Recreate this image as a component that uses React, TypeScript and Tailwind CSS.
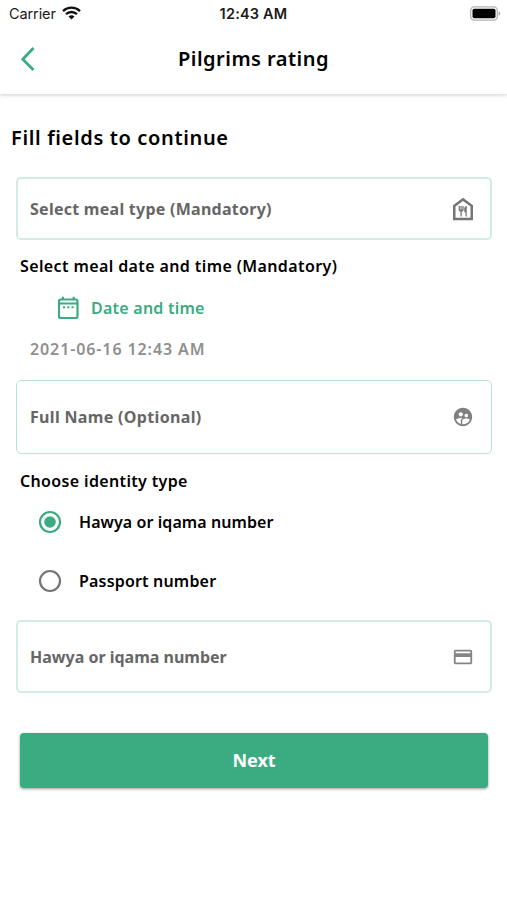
import React, { useState } from 'react';
import { MdCreditCard, MdOutlineFoodBank, MdSupervisedUserCircle } from 'react-icons/md';

interface FieldProps {
  label: string;
  icon: React.ReactNode;
  className: string;
  labelClassName: string;
}

function Field({ label, icon, className, labelClassName }: FieldProps) {
  return (
    <div className={`mr-[15px] ml-[16px] flex items-center justify-between rounded-[5px] ${className}`}>
      <span className={`whitespace-nowrap text-[16px] leading-6 font-bold text-[#666666] ${labelClassName}`}>{label}</span>
      {icon}
    </div>
  );
}

interface RadioOptionProps {
  label: string;
  selected: boolean;
  onSelect: () => void;
  labelClassName: string;
}

function RadioOption({ label, selected, onSelect, labelClassName }: RadioOptionProps) {
  return (
    <button type="button" role="radio" aria-checked={selected} onClick={onSelect} className="flex h-[58.5px] items-center gap-[17px] pl-[38px]">
      <svg className="h-6 w-6" viewBox="0 0 24 24" fill="none">
        <circle cx="12" cy="12" r="10" stroke={selected ? '#3bab81' : '#757575'} strokeWidth="2.2" />
        {selected && <circle cx="12" cy="12" r="5.8" fill="#3bab81" />}
      </svg>
      <span className={`whitespace-nowrap text-[16px] leading-6 font-semibold ${labelClassName}`}>{label}</span>
    </button>
  );
}

function StatusBar() {
  return (
    <div className="grid h-7 grid-cols-3 items-center pl-[9px] pr-[6px] font-['Inter',sans-serif] text-[#1a1a1a]">
      <div className="flex items-center gap-[6px]">
        <span className="text-[14.5px] leading-5 tracking-[-0.1px]">Carrier</span>
        <svg className="mb-[2px] h-[14px] w-[19px]" viewBox="0 0 19 14" fill="none" stroke="#111" strokeWidth="2.3">
          <path d="M1 5.1a12.3 12.3 0 0 1 17 0" />
          <path d="M4 8.2a8 8 0 0 1 11 0" />
          <path d="M9.5 13.5 6.5 10.6a4.3 4.3 0 0 1 6 0z" fill="#111" stroke="none" />
        </svg>
      </div>
      <span className="pr-[3px] text-center text-[14.5px] leading-5 font-semibold tracking-[0.2px] whitespace-nowrap">12:43 AM</span>
      <svg className="mb-[2px] h-[15px] w-[31px] justify-self-end" viewBox="0 0 31 15">
        <rect x="0.7" y="0.9" width="26.6" height="13.2" rx="3.6" fill="white" stroke="#b3b3b3" strokeWidth="1.3" />
        <rect x="2.5" y="2.7" width="23" height="9.6" rx="1.8" fill="black" />
        <path d="M28.7 5.2c2 .8 2 3.8 0 4.6z" fill="#aaa" />
      </svg>
    </div>
  );
}

export default function App() {
  const [identity, setIdentity] = useState<'hawya' | 'passport'>('hawya');

  return (
    <div className="flex h-[900px] w-[507px] flex-col overflow-hidden bg-white font-['Noto_Sans',sans-serif] text-black">
      {/* Header */}
      <header className="h-[94px] shrink-0 shadow-[0_1px_4px_rgba(0,0,0,0.2)]">
        <StatusBar />
        <div className="grid h-[62px] grid-cols-[60px_1fr_60px] items-center">
          <button type="button" aria-label="Back" className="pl-5">
            <svg className="h-6 w-4" viewBox="0 0 16 24" fill="none" stroke="#3bab81" strokeWidth="2.8">
              <path d="M13.5 1 2.8 12.2 13.5 23" />
            </svg>
          </button>
          <h1 className="text-center text-[20px] leading-7 font-semibold tracking-[0.47px]">Pilgrims rating</h1>
        </div>
      </header>

      <main className="flex flex-col">
        <h2 className="mt-[30px] ml-[11px] text-[20px] leading-7 font-semibold tracking-[0.65px]">Fill fields to continue</h2>

        <Field
          label="Select meal type (Mandatory)"
          labelClassName="tracking-[0.26px]"
          className="mt-[25px] h-[63px] border-2 border-[#d3ece3] pr-[12px] pl-[12px]"
          icon={<MdOutlineFoodBank className="h-[30px] w-[30px] text-[#757575]" />}
        />

        <p className="mt-[14px] ml-[20px] text-[16px] leading-6 font-semibold tracking-[0.39px]">Select meal date and time (Mandatory)</p>
        <button type="button" className="mt-[18px] ml-[57px] flex items-center gap-[12px] self-start text-[#3bab81]">
          <svg className="h-6 w-[22px]" viewBox="0 0 22 24" fill="none" stroke="currentColor" strokeWidth="2.2">
            <rect x="2" y="3.5" width="18.5" height="18.5" rx="1.8" />
            <path d="M2 7.5h18.5M5.8 0.8v3M16.7 0.8v3" />
            <path d="M6 11.2h2M10.3 11.2h2M14.6 11.2h2" strokeWidth="2" />
          </svg>
          <span className="text-[16px] leading-6 font-semibold tracking-[0.24px]">Date and time</span>
        </button>
        <p className="mt-[17px] ml-[30px] text-[16px] leading-6 font-semibold tracking-[0.9px] text-[#8f8f8f]">2021-06-16 12:43 AM</p>

        <Field
          label="Full Name (Optional)"
          labelClassName="tracking-[0.33px]"
          className="mt-[19px] h-[74px] border border-[#b9e3d4] pr-[17px] pl-[13px]"
          icon={<MdSupervisedUserCircle className="h-[22px] w-[22px] text-[#808080]" />}
        />

        <p className="mt-[15px] ml-[20px] text-[16px] leading-6 font-semibold tracking-[0.35px]">Choose identity type</p>
        <div role="radiogroup" className="flex flex-col">
          <RadioOption
            label="Hawya or iqama number"
            labelClassName="tracking-[0.08px]"
            selected={identity === 'hawya'}
            onSelect={() => setIdentity('hawya')}
          />
          <RadioOption
            label="Passport number"
            labelClassName="tracking-[0.18px]"
            selected={identity === 'passport'}
            onSelect={() => setIdentity('passport')}
          />
        </div>

        <Field
          label="Hawya or iqama number"
          labelClassName=""
          className="mt-[10px] h-[73px] border-2 border-[#d3ece3] pr-[16px] pl-[12px]"
          icon={<MdCreditCard className="h-[22px] w-[22px] text-[#858585]" />}
        />

        <button
          type="button"
          className="mt-[40px] mr-[19px] ml-[20px] h-[55px] rounded-[4px] bg-[#3bab81] text-[18px] font-bold text-white shadow-[0_1px_3px_rgba(0,0,0,0.4)]"
        >
          Next
        </button>
      </main>
    </div>
  );
}
